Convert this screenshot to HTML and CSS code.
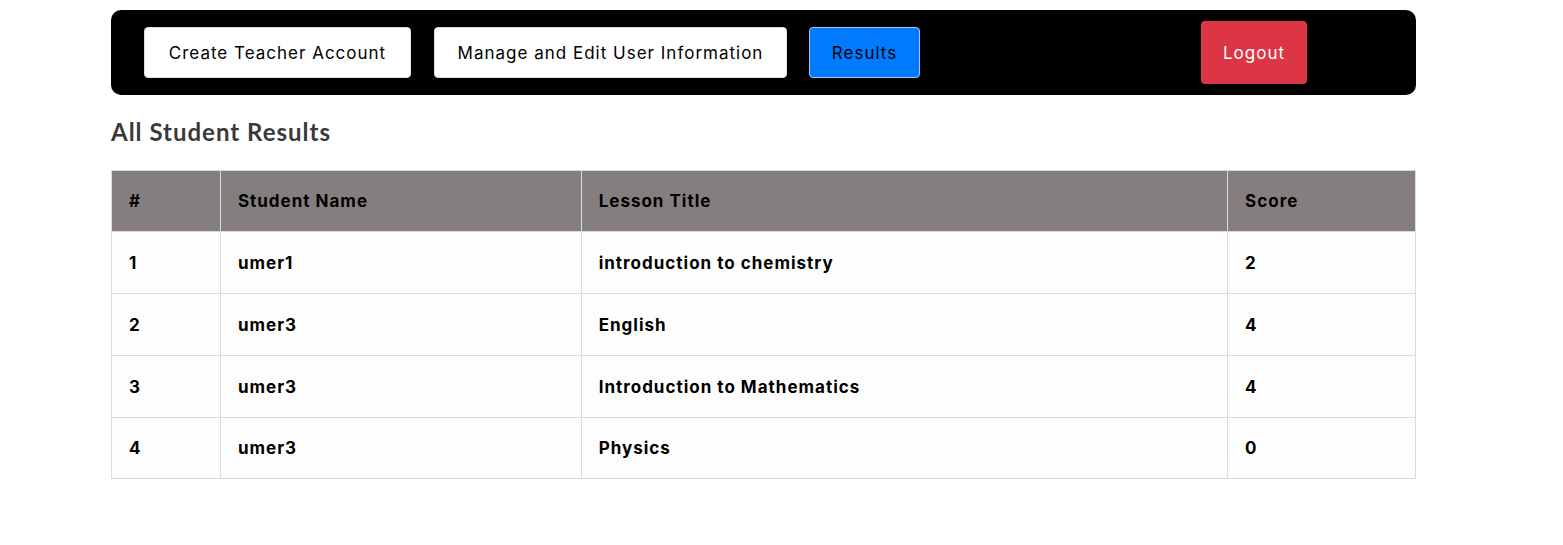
FILE: index.html
```html
<!DOCTYPE html>
<html lang="en">
<head>
<meta charset="utf-8">
<title>All Student Results</title>
<link rel="stylesheet" href="styles.css">
</head>
<body>
<div class="page">
  <nav class="navbar">
    <div class="nav-links">
      <button class="btn btn-light btn-create">Create Teacher Account</button>
      <button class="btn btn-light btn-manage">Manage and Edit User Information</button>
      <button class="btn btn-primary">Results</button>
    </div>
    <button class="btn btn-danger">Logout</button>
  </nav>
  <h2 class="title">All Student Results</h2>
  <table class="results">
    <colgroup>
      <col class="c1"><col class="c2"><col class="c3"><col class="c4">
    </colgroup>
    <thead>
      <tr><th>#</th><th>Student Name</th><th>Lesson Title</th><th>Score</th></tr>
    </thead>
    <tbody>
      <tr><td>1</td><td>umer1</td><td>introduction to chemistry</td><td>2</td></tr>
      <tr><td>2</td><td>umer3</td><td>English</td><td>4</td></tr>
      <tr><td>3</td><td>umer3</td><td>Introduction to Mathematics</td><td>4</td></tr>
      <tr><td>4</td><td>umer3</td><td>Physics</td><td>0</td></tr>
    </tbody>
  </table>
</div>
</body>
</html>
```
FILE: styles.css
```css
* { box-sizing: border-box; }
html, body { margin: 0; padding: 0; background: #ffffff; }
body { font-family: "Inter", "Liberation Sans", sans-serif; color: #000; }
.page { width: 1305px; margin-left: 111px; padding-top: 10px; }
.navbar {
  background: #000;
  border-radius: 10px;
  height: 85px;
  display: flex;
  align-items: center;
  padding-left: 33px;
}
.nav-links { display: flex; gap: 22px; align-items: center; }
.btn {
  font-family: inherit;
  font-size: 17px;
  letter-spacing: 1px;
  border: 1px solid #ddd;
  border-radius: 4px;
  height: 51px;
  padding: 0;
  cursor: pointer;
  color: #000;
  text-align: center;
}
.btn-light { background: #fff; }
.btn-create { width: 267px; }
.btn-manage { width: 353px; margin-left: 1px; }
.btn-primary { background: #007bff; border-color: #9ec6f5; width: 111px; }
.btn-danger {
  background: #dc3545;
  color: #fff;
  border: none;
  height: 63px;
  width: 106px;
  margin-left: 281px;
}
.title {
  font-family: "Lato", "DejaVu Sans", sans-serif;
  font-weight: 700;
  font-size: 24px;
  letter-spacing: 1px;
  color: #3a3a3a;
  margin: 22px 0 24px 0;
  line-height: 29px;
}
.results { width: 100%; border-collapse: collapse; }
.c1 { width: 109px; } .c2 { width: 361px; } .c3 { width: 647px; } .c4 { width: 188px; }
.results th, .results td {
  border: 1px solid #dcdcdc;
  text-align: left;
  font-weight: 700;
  font-size: 17px;
  letter-spacing: 1px;
  padding: 0 17px;
  height: 62px;
}
.results thead th { background: #847f7e; height: 61px; }
.results tbody tr:last-child td { height: 61px; }
.results tbody td { background: #fdfdfd; }
```
